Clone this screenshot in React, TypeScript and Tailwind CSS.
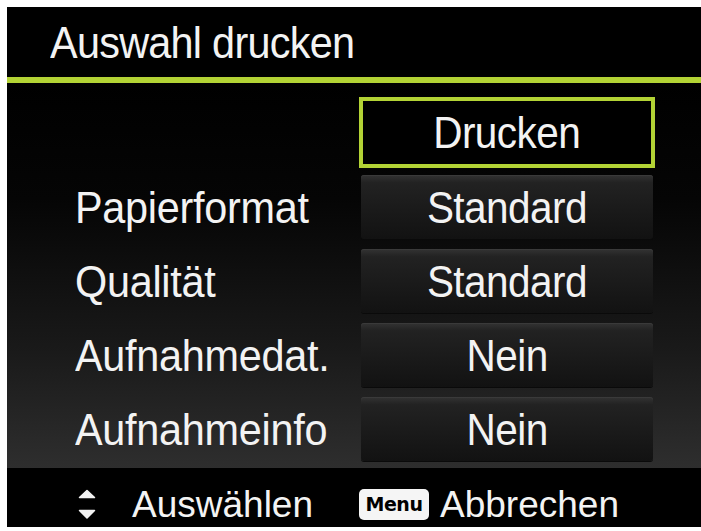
import React from "react";

const font = { fontFamily: '"Liberation Sans", Arial, sans-serif' };

function Arrows() {
  return (
    <svg width="18" height="31" viewBox="0 0 18 31" className="shrink-0">
      <path d="M9 1.5 L16.5 8.5 L1.5 8.5 Z" fill="#f2f2f2" stroke="#f2f2f2" strokeWidth="1.5" strokeLinejoin="round" />
      <path d="M1.5 21.5 L16.5 21.5 L9 29 Z" fill="#f2f2f2" stroke="#f2f2f2" strokeWidth="1.5" strokeLinejoin="round" />
    </svg>
  );
}

function Narrow({ children, center }: { children: React.ReactNode; center?: boolean }) {
  return (
    <span
      className={
        center
          ? "inline-block whitespace-nowrap text-[45px] leading-none tracking-[-0.6px] scale-x-[0.9] origin-center"
          : "inline-block whitespace-nowrap text-[45px] leading-none tracking-[-0.3px] scale-x-[0.92] origin-left"
      }
    >
      {children}
    </span>
  );
}

function ValueBox({ children }: { children: React.ReactNode }) {
  return (
    <div className="h-[64px] w-[292px] rounded-[3px] flex items-center justify-center text-[#f3f3f3] bg-[linear-gradient(to_bottom,#333333_0%,#222222_12%,#1a1a1a_55%,#121212_100%)] shadow-[inset_0_1px_0_#3a3a3a,0_1px_0_#0a0a0a]">
      <Narrow center>{children}</Narrow>
    </div>
  );
}

export default function App() {
  const rows = [
    ["Papierformat", "Standard"],
    ["Qualität", "Standard"],
    ["Aufnahmedat.", "Nein"],
    ["Aufnahmeinfo", "Nein"],
  ];
  return (
    <div className="w-[701px] h-[531px] bg-white pt-[7px] pl-[7px] pb-[4px] overflow-hidden" style={font}>
      <div className="w-full h-full flex flex-col bg-black">
        <div className="h-[70px] flex items-center pl-[43px] text-[#f3f3f3] bg-black">
          <span className="inline-block whitespace-nowrap text-[45px] leading-none tracking-[-0.8px] scale-x-[0.92] origin-left">
            Auswahl drucken
          </span>
        </div>
        <div className="h-[6px] bg-[#b3d335]" />
        <div className="flex-1 flex flex-col pt-[14px] pl-[68px] bg-[linear-gradient(to_bottom,#000000_0%,#050505_30%,#1a1a1a_70%,#2e2e2e_100%)]">
          <div className="flex items-center mb-[7px]">
            <div className="flex-1" />
            <div className="h-[71px] w-[296px] -mx-[2px] border-[4px] border-[#b3d335] bg-black flex items-center justify-center text-[#f3f3f3]">
              <Narrow center>Drucken</Narrow>
            </div>
            <div className="w-[48px]" />
          </div>
          <div className="flex flex-col gap-[10px]">
            {rows.map(([label, value], i) => (
              <div key={i} className="flex items-center">
                <div className="flex-1 text-[#f3f3f3]">
                  <Narrow>{label}</Narrow>
                </div>
                <ValueBox>{value}</ValueBox>
                <div className="w-[48px]" />
              </div>
            ))}
          </div>
        </div>
        <div className="h-[59px] bg-black flex items-center pt-[14px] pl-[71px] text-[37px] text-[#f3f3f3]">
          <Arrows />
          <span className="ml-[36px]">Auswählen</span>
          <span
            className="ml-[46px] w-[70px] h-[31px] rounded-[5px] bg-[#f5f5f5] text-black flex items-center justify-center text-[19px] font-black tracking-[-0.5px]"
            style={{ fontFamily: '"DejaVu Sans", sans-serif' }}
          >
            Menu
          </span>
          <span className="ml-[11px]">Abbrechen</span>
        </div>
      </div>
    </div>
  );
}
